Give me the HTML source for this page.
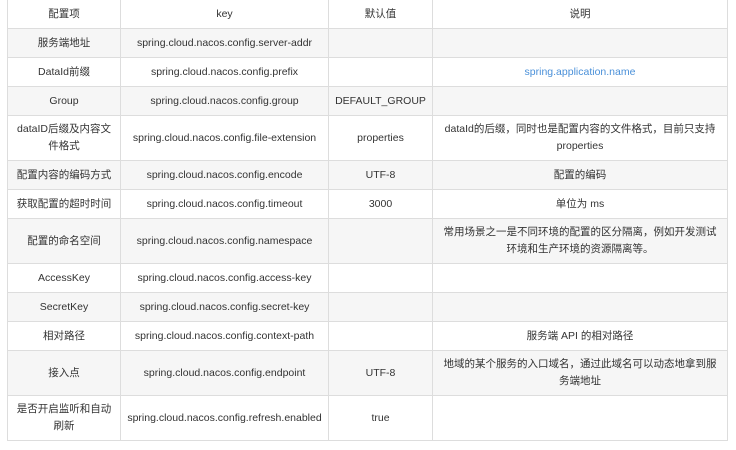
<!DOCTYPE html>
<html><head><meta charset="utf-8"><style>
body{margin:0;background:#fff;width:736px;height:450px;overflow:hidden}
table{position:absolute;left:7px;top:-1px;border-collapse:collapse;table-layout:fixed;width:720px;font-family:"Liberation Sans","Noto Sans CJK SC",sans-serif;font-size:10.5px;color:#333}
td{border:1px solid #ddd;text-align:center;vertical-align:middle;padding:0 8px;line-height:17px;box-sizing:border-box}
tr.g td{background:#f6f6f6}
a{color:#4a90d9;text-decoration:none}
</style></head><body>
<table>
<colgroup><col style="width:113px"><col style="width:208px"><col style="width:104px"><col style="width:295px"></colgroup>
<tr style="height:29px"><td>配置项</td><td>key</td><td>默认值</td><td>说明</td></tr>
<tr class="g" style="height:29px"><td>服务端地址</td><td>spring.cloud.nacos.config.server-addr</td><td></td><td></td></tr>
<tr style="height:29px"><td>DataId前缀</td><td>spring.cloud.nacos.config.prefix</td><td></td><td><a>spring.application.name</a></td></tr>
<tr class="g" style="height:29px"><td>Group</td><td>spring.cloud.nacos.config.group</td><td style="padding:0 4px">DEFAULT_GROUP</td><td></td></tr>
<tr style="height:45px"><td>dataID后缀及内容文件格式</td><td>spring.cloud.nacos.config.file-extension</td><td>properties</td><td>dataId的后缀，同时也是配置内容的文件格式，目前只支持 properties</td></tr>
<tr class="g" style="height:29px"><td>配置内容的编码方式</td><td>spring.cloud.nacos.config.encode</td><td>UTF-8</td><td>配置的编码</td></tr>
<tr style="height:29px"><td>获取配置的超时时间</td><td>spring.cloud.nacos.config.timeout</td><td>3000</td><td>单位为 ms</td></tr>
<tr class="g" style="height:45px"><td>配置的命名空间</td><td>spring.cloud.nacos.config.namespace</td><td></td><td>常用场景之一是不同环境的配置的区分隔离，例如开发测试环境和生产环境的资源隔离等。</td></tr>
<tr style="height:29px"><td>AccessKey</td><td>spring.cloud.nacos.config.access-key</td><td></td><td></td></tr>
<tr class="g" style="height:29px"><td>SecretKey</td><td>spring.cloud.nacos.config.secret-key</td><td></td><td></td></tr>
<tr style="height:29px"><td>相对路径</td><td>spring.cloud.nacos.config.context-path</td><td></td><td>服务端 API 的相对路径</td></tr>
<tr class="g" style="height:45px"><td>接入点</td><td>spring.cloud.nacos.config.endpoint</td><td>UTF-8</td><td>地域的某个服务的入口域名，通过此域名可以动态地拿到服务端地址</td></tr>
<tr style="height:45px"><td>是否开启监听和自动刷新</td><td style="padding:0 2px">spring.cloud.nacos.config.refresh.enabled</td><td>true</td><td></td></tr>
</table>
</body></html>
